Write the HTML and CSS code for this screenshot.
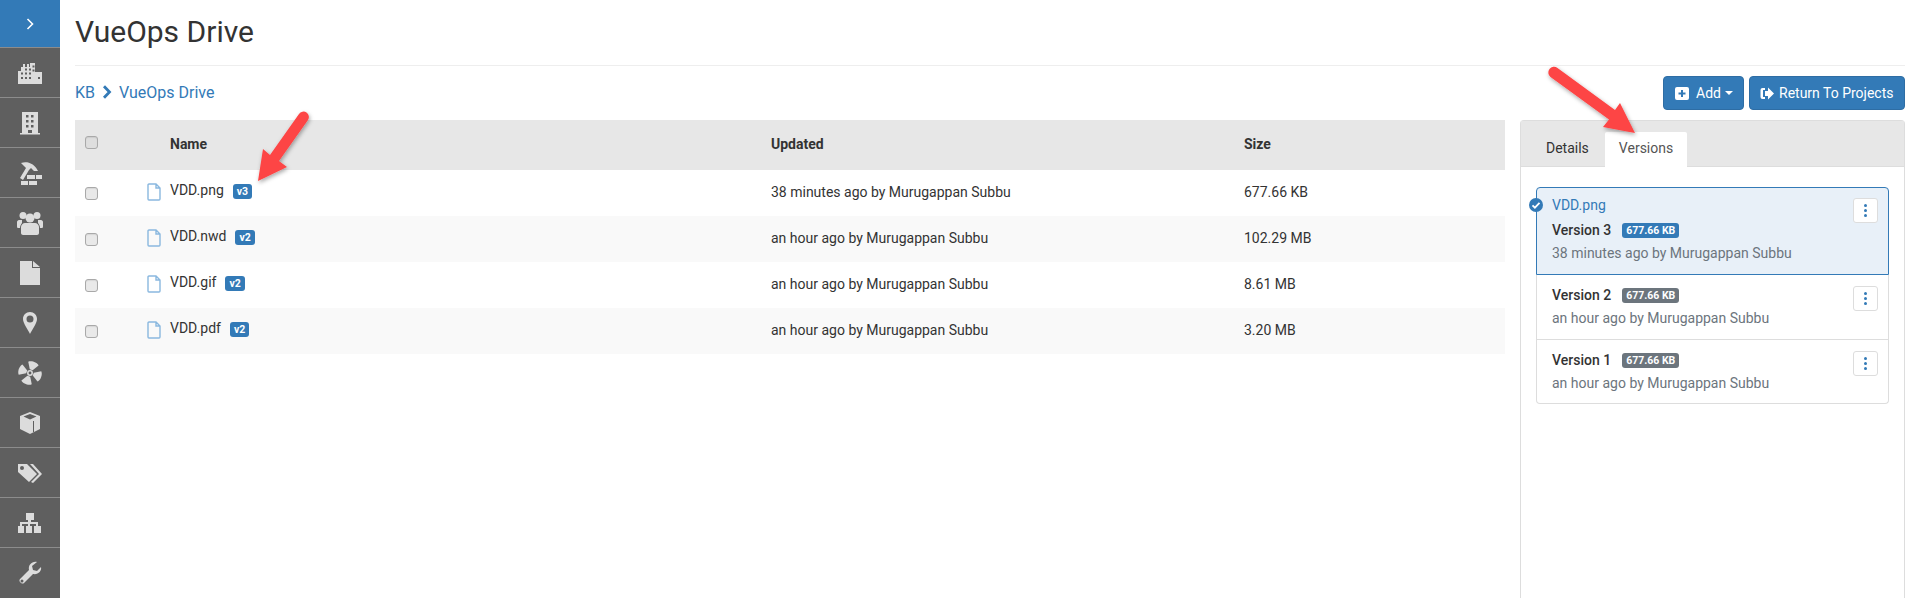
FILE: index.html
```html
<!DOCTYPE html>
<html lang="en">
<head>
<meta charset="utf-8">
<title>VueOps Drive</title>
<link rel="stylesheet" href="styles.css">
</head>
<body>
<div class="app">
  <nav class="sidebar">
    <div class="nav-toggle"><svg width="12" height="14" viewBox="0 0 12 14"><path d="M3.500 2l5 5-5 5" fill="none" stroke="#fff" stroke-width="1.600"/></svg></div>
    <div class="nav-item"><svg class="nav-icon" width="26" height="24" viewBox="0 0 26 24"><path fill-rule="evenodd" d="M1 10h3V6h2V3h2v3h2V3h2v3h1V2h5v9h7v12H1zM4 11.500v2h2v-2zm4 0v2h2v-2zm4 0v2h2v-2zM4 16v2h2v-2zm4 0v2h2v-2zm4 0v2h2v-2zm9 0v2h2v-2zM8 7.500v2h2v-2zm4 0v2h2v-2zm3.500-3v2h2v-2zm0 4v2h2v-2z"/></svg></div>
    <div class="nav-item"><svg class="nav-icon" width="24" height="24" viewBox="0 0 24 24"><path fill-rule="evenodd" d="M4 1h16v21h2v1.500H2V22h2zM8 4v2.500h2.500V4zm5 0v2.500h2.500V4zM8 9v2.500h2.500V9zm5 0v2.500h2.500V9zM8 14v2.500h2.500V14zm5 0v2.500h2.500V14zm-3 5v3h4v-3z"/></svg></div>
    <div class="nav-item"><svg class="nav-icon" width="24" height="24" viewBox="0 0 24 24"><path d="M3 2c6-2 13 0 17 8h-4l-3-3-2 2-6 10-3-2 6-10-2-2zM9 14h8v4H9zM18 14h6v4h-6zM3 20h7v4H3zM11 20h8v4h-8z"/></svg></div>
    <div class="nav-item"><svg class="nav-icon" width="26" height="24" viewBox="0 0 26 24"><circle cx="6" cy="4.500" r="3.500"/><circle cx="20" cy="4.500" r="3.500"/><circle cx="13" cy="7" r="4.500"/><path d="M0 11c0-1 1-2 2-2h3v3c-1 1-2 3-2 5H1c-1 0-1-1-1-2zM26 11c0-1-1-2-2-2h-3v3c1 1 2 3 2 5h2c1 0 1-1 1-2zM8 12h10c2 0 4 2 4 4v6c0 1-1 2-2 2H6c-1 0-2-1-2-2v-6c0-2 2-4 4-4z"/></svg></div>
    <div class="nav-item"><svg class="nav-icon" width="24" height="24" viewBox="0 0 24 24"><path d="M2 0h12v7h8v17H2zM15 0l7 6h-7z"/></svg></div>
    <div class="nav-item"><svg class="nav-icon" width="24" height="24" viewBox="0 0 24 24"><path fill-rule="evenodd" d="M12 1c4 0 7 3 7 7 0 4-5 11-7 15-2-4-7-11-7-15 0-4 3-7 7-7zm0 3.500a3.500 3.500 0 1 0 0 7 3.500 3.500 0 0 0 0-7z"/></svg></div>
    <div class="nav-item"><svg class="nav-icon" width="24" height="24" viewBox="0 0 24 24"><g transform="rotate(20 12 12)"><path d="M10.500 8.500L6.500 2C9-.5 15-.5 17.500 2l-4 6.500z"/><path d="M10.500 8.500L6.500 2C9-.5 15-.5 17.500 2l-4 6.500z" transform="rotate(90 12 12)"/><path d="M10.500 8.500L6.500 2C9-.5 15-.5 17.500 2l-4 6.500z" transform="rotate(180 12 12)"/><path d="M10.500 8.500L6.500 2C9-.5 15-.5 17.500 2l-4 6.500z" transform="rotate(270 12 12)"/></g><circle cx="12" cy="12" r="2.200" fill="none" stroke="#dcdcdc" stroke-width="1.500"/></svg></div>
    <div class="nav-item"><svg class="nav-icon" width="24" height="24" viewBox="0 0 24 24"><path fill-rule="evenodd" d="M12 1l10 4v13l-10 5-10-5V5zM5.500 5.500L12 8.500l6.500-3-6.500-2.500zM15 10v11h1V10z"/></svg></div>
    <div class="nav-item"><svg class="nav-icon" width="26" height="24" viewBox="0 0 26 24"><path fill-rule="evenodd" d="M1 3h9l10 10-8 8L1 11zm4 2a2 2 0 1 0 0 4 2 2 0 0 0 0-4z"/><path d="M13 3h3l9 10-9 9-2-1 8-8z"/></svg></div>
    <div class="nav-item"><svg class="nav-icon" width="26" height="24" viewBox="0 0 26 24"><path d="M9 2h8v7h-3v2h7v4h3v7h-7v-7h2v-2h-6v2h2v7H9v-7h2v-2H5v2h2v7H1v-7h2v-4h8V9H9z"/></svg></div>
    <div class="nav-item"><svg class="nav-icon" width="24" height="24" viewBox="0 0 24 24"><path fill-rule="evenodd" d="M23 6c1 4-3 8-8 7L6 22c-2 2-6-2-4-4l9-9c-1-5 3-9 8-8l-5 4 1 4 4 1zM4 18.500a1.500 1.500 0 1 0 0 3 1.500 1.500 0 0 0 0-3z"/></svg></div>
  </nav>

  <main class="main">
    <header class="page-header"><h1 class="page-title">VueOps Drive</h1></header>

    <div class="toolbar">
      <div class="crumbs">
        <a class="crumb">KB</a>
        <svg class="crumb-sep" width="10" height="14" viewBox="0 0 10 14"><path d="M2 1.200L7.500 7 2 12.800" fill="none" stroke="#337ab7" stroke-width="2.800"/></svg>
        <a class="crumb">VueOps Drive</a>
      </div>
      <div class="actions">
        <button class="btn btn-add">
          <svg class="btn-icon" width="14" height="13" viewBox="0 0 14 13"><path fill-rule="evenodd" d="M2 0h10a2 2 0 0 1 2 2v9a2 2 0 0 1-2 2H2a2 2 0 0 1-2-2V2a2 2 0 0 1 2-2zm4 3v2.500H3.500v2H6V10h2V7.500h2.500v-2H8V3z" fill="#fff"/></svg>
          <span>Add</span><span class="caret"></span>
        </button>
        <button class="btn btn-return">
          <svg class="btn-icon" width="14" height="13" viewBox="0 0 14 13"><path d="M5 1H2.500A2 2 0 0 0 .5 3v7a2 2 0 0 0 2 2H5v-2H3V3h2zM8 .5L14 6.500 8 12.500V9H5V4h3z" fill="#fff"/></svg>
          <span>Return To Projects</span>
        </button>
      </div>
    </div>

    <div class="content">
      <section class="files">
        <div class="file-row file-head">
          <span class="check"></span>
          <span class="head-name">Name</span>
          <span class="cell">Updated</span>
          <span class="cell">Size</span>
        </div>
        <div class="file-row">
          <span class="check"></span>
          <span class="file-name"><svg class="file-icon" width="14" height="18" viewBox="0 0 14 18"><path d="M1 2a1 1 0 0 1 1-1h7l4 4v11a1 1 0 0 1-1 1H2a1 1 0 0 1-1-1zM9 1v4h4" fill="none" stroke="#8ab8df" stroke-width="1.400"/></svg><span class="file-text">VDD.png</span><span class="tag">v3</span></span>
          <span class="cell">38 minutes ago by Murugappan Subbu</span>
          <span class="cell">677.66 KB</span>
        </div>
        <div class="file-row">
          <span class="check"></span>
          <span class="file-name"><svg class="file-icon" width="14" height="18" viewBox="0 0 14 18"><path d="M1 2a1 1 0 0 1 1-1h7l4 4v11a1 1 0 0 1-1 1H2a1 1 0 0 1-1-1zM9 1v4h4" fill="none" stroke="#8ab8df" stroke-width="1.400"/></svg><span class="file-text">VDD.nwd</span><span class="tag">v2</span></span>
          <span class="cell">an hour ago by Murugappan Subbu</span>
          <span class="cell">102.29 MB</span>
        </div>
        <div class="file-row">
          <span class="check"></span>
          <span class="file-name"><svg class="file-icon" width="14" height="18" viewBox="0 0 14 18"><path d="M1 2a1 1 0 0 1 1-1h7l4 4v11a1 1 0 0 1-1 1H2a1 1 0 0 1-1-1zM9 1v4h4" fill="none" stroke="#8ab8df" stroke-width="1.400"/></svg><span class="file-text">VDD.gif</span><span class="tag">v2</span></span>
          <span class="cell">an hour ago by Murugappan Subbu</span>
          <span class="cell">8.61 MB</span>
        </div>
        <div class="file-row">
          <span class="check"></span>
          <span class="file-name"><svg class="file-icon" width="14" height="18" viewBox="0 0 14 18"><path d="M1 2a1 1 0 0 1 1-1h7l4 4v11a1 1 0 0 1-1 1H2a1 1 0 0 1-1-1zM9 1v4h4" fill="none" stroke="#8ab8df" stroke-width="1.400"/></svg><span class="file-text">VDD.pdf</span><span class="tag">v2</span></span>
          <span class="cell">an hour ago by Murugappan Subbu</span>
          <span class="cell">3.20 MB</span>
        </div>
      </section>

      <aside class="panel">
        <div class="tabs">
          <span class="tab">Details</span>
          <span class="tab tab-active">Versions</span>
        </div>
        <div class="panel-body">
          <div class="versions">
            <div class="version version-current">
              <svg class="current-mark" width="14" height="14" viewBox="0 0 14 14"><circle cx="7" cy="7" r="7" fill="#337ab7"/><path d="M3.500 7.300l2.400 2.400 4.600-4.800" fill="none" stroke="#fff" stroke-width="1.800"/></svg>
              <div class="version-info">
                <a class="version-file">VDD.png</a>
                <div class="version-title">Version 3<span class="size size-current">677.66 KB</span></div>
                <div class="version-meta">38 minutes ago by Murugappan Subbu</div>
              </div>
              <span class="kebab"><i></i><i></i><i></i></span>
            </div>
            <div class="version version-middle">
              <div class="version-info">
                <div class="version-title">Version 2<span class="size">677.66 KB</span></div>
                <div class="version-meta">an hour ago by Murugappan Subbu</div>
              </div>
              <span class="kebab"><i></i><i></i><i></i></span>
            </div>
            <div class="version">
              <div class="version-info">
                <div class="version-title">Version 1<span class="size">677.66 KB</span></div>
                <div class="version-meta">an hour ago by Murugappan Subbu</div>
              </div>
              <span class="kebab"><i></i><i></i><i></i></span>
            </div>
          </div>
        </div>
      </aside>
    </div>
  </main>
</div>

<svg class="arrows" width="1920" height="598" viewBox="0 0 1920 598">
  <defs><filter id="arrow-shadow" x="-30%" y="-30%" width="160%" height="160%"><feDropShadow dx="1" dy="2" stdDeviation="2" flood-color="#000" flood-opacity=".35"/></filter></defs>
  <g filter="url(#arrow-shadow)" fill="#fd4444">
    <path d="M258 181L263 149 270 155 299 114a5 5 0 0 1 9 6L279 161 287 167z"/>
    <path d="M1635 133L1603 127 1609 119.500 1550.500 77a5.500 5.500 0 0 1 7-9L1615 110 1620 103z"/>
  </g>
</svg>
</body>
</html>
```
FILE: styles.css
```css
* { box-sizing: border-box; }
html, body { margin: 0; height: 100%; overflow: hidden; }
body { font-family: Roboto, "Liberation Sans", sans-serif; font-size: 14px; color: #333; background: #fff; }

.app { display: flex; height: 598px; }

.sidebar { width: 60px; flex: none; background: #5f5f5f; display: flex; flex-direction: column; overflow: hidden; }
.nav-toggle { height: 47px; flex: none; background: #337ab7; display: flex; align-items: center; justify-content: center; }
.nav-item { height: 50px; flex: none; display: flex; align-items: center; justify-content: center; border-top: 1px solid #8c8c8c; }
.nav-icon { fill: #dcdcdc; }

.main { flex: 1; min-width: 0; padding: 0 15px; display: flex; flex-direction: column; }
.page-header { height: 66px; flex: none; border-bottom: 1px solid #eee; display: flex; align-items: center; }
.page-title { margin: 0 0 2px; font-size: 30px; font-weight: 400; line-height: 1.1; color: #333; }

.toolbar { height: 54px; flex: none; display: flex; align-items: center; justify-content: space-between; }
.crumbs { display: flex; align-items: center; gap: 7px; color: #337ab7; font-size: 16px; margin-top: -2px; }
.actions { display: flex; gap: 5px; }
.btn { height: 34px; display: flex; align-items: center; font: 14px Roboto, sans-serif; color: #fff; background: #337ab7; border: 1px solid #2e6da4; border-radius: 4px; }
.btn-add { width: 81px; padding: 0 0 0 11px; }
.btn-add .btn-icon { margin-right: 7px; }
.btn-return { width: 156px; padding: 0 0 0 10px; }
.btn-return .btn-icon { margin-right: 5px; }
.caret { width: 0; height: 0; margin-left: 4px; border-left: 4px solid transparent; border-right: 4px solid transparent; border-top: 4px solid #fff; }

.content { flex: 1; min-height: 0; display: flex; gap: 15px; }

.files { width: 1430px; flex: none; }
.file-row { height: 46px; display: grid; grid-template-columns: 72px 624px 473px 1fr; align-items: center; }
.file-row:nth-child(odd) { background: #f9f9f9; }
.file-row.file-head { height: 50px; background: #e7e7e7; font-weight: 700; }
.cell { margin-bottom: 2px; }
.check { width: 13px; height: 13px; margin-left: 10px; background: #e9e9e9; border: 1px solid #a9a9a9; border-radius: 3px; box-shadow: inset 0 1px 1px rgba(0,0,0,.08); }
.file-head .check { background: #dedede; margin-bottom: 6px; }
.head-name { padding-left: 23px; margin-bottom: 2px; }
.file-name { display: flex; align-items: center; }
.file-icon { margin-right: 9px; margin-bottom: 2px; flex: none; }
.file-text { margin-bottom: 6px; }
.tag { margin-left: 9px; margin-bottom: 4px; padding: 0 4px; height: 15px; line-height: 15px; font-size: 10.500px; font-weight: 700; color: #fff; background: #337ab7; border-radius: 3px; }

.panel { flex: 1; min-width: 0; background: #fff; border: 1px solid #ddd; border-bottom: 0; border-radius: 4px 4px 0 0; display: flex; flex-direction: column; }
.tabs { height: 46px; flex: none; padding: 11px 0 0 11px; background: #e7e7e7; border-bottom: 1px solid #ddd; display: flex; gap: 2px; }
.tab { height: 35px; padding: 0 14px; line-height: 33px; }
.tab-active { background: #fff; border-radius: 2px 2px 0 0; color: #555; height: 36px; }
.panel-body { padding: 20px 15px; }
.versions { border-radius: 4px; }
.version { position: relative; display: flex; justify-content: space-between; align-items: flex-start; padding: 10px 10px 9px 15px; background: #fff; border: 1px solid #ddd; border-top: 0; }
.version-middle { padding-bottom: 10px; }
.version:last-child { border-radius: 0 0 4px 4px; }
.version-current { background: #e8f0f8; border: 1px solid #337ab7; border-radius: 4px 4px 0 0; padding: 7px 10px 10px 15px; }
.current-mark { position: absolute; left: -8px; top: 10px; }
.version-file { display: block; color: #337ab7; line-height: 21px; margin-bottom: 4px; }
.version-title { font-weight: 500; line-height: 21px; color: #333; display: flex; align-items: center; }
.size { margin-left: 11px; padding: 0 4px; height: 15px; line-height: 15px; font-size: 10.500px; font-weight: 700; color: #fff; background: #6c757d; border-radius: 3px; }
.size-current { background: #337ab7; }
.version-meta { color: #6c757d; line-height: 22px; margin-top: 1px; }
.kebab { width: 25px; height: 25px; flex: none; margin-top: 1px; background: #fff; border: 1px solid #ddd; border-radius: 3px; display: flex; flex-direction: column; align-items: center; justify-content: center; gap: 2px; }
.version-current .kebab { margin-top: 3px; }
.kebab i { width: 3px; height: 3px; border-radius: 50%; background: #337ab7; }

.arrows { position: absolute; left: 0; top: 0; pointer-events: none; }
```
